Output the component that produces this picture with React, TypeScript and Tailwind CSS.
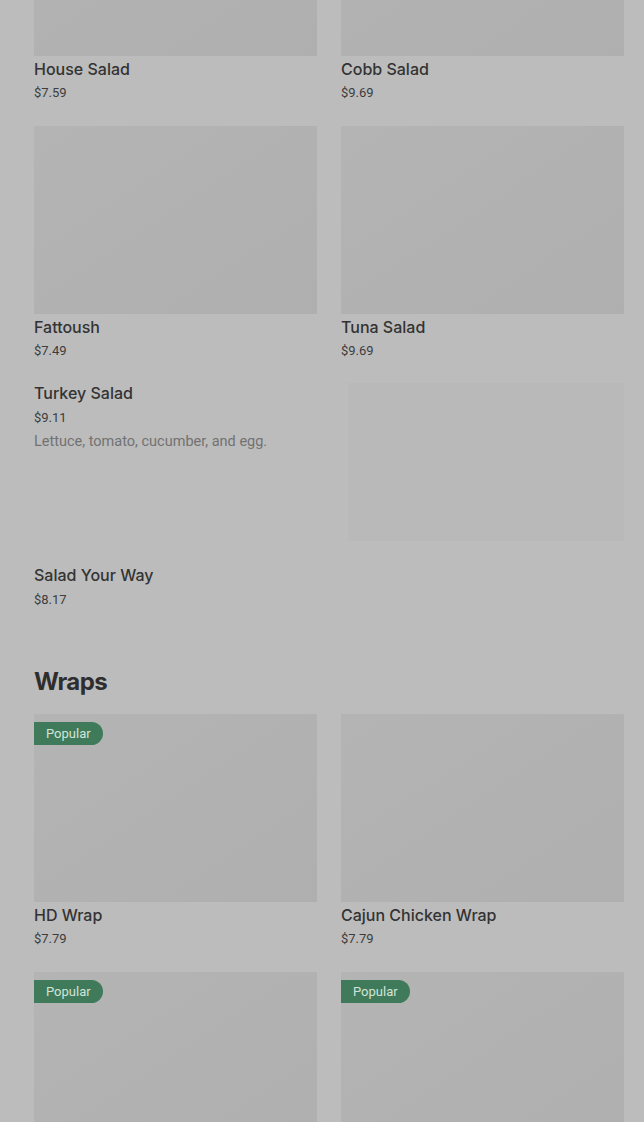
import React from "react";

type Item = {
  name: string;
  price: string;
  popular?: boolean;
};

const salads: Item[] = [
  { name: "House Salad", price: "$7.59" },
  { name: "Cobb Salad", price: "$9.69" },
  { name: "Fattoush", price: "$7.49" },
  { name: "Tuna Salad", price: "$9.69" },
];

const wraps: Item[] = [
  { name: "HD Wrap", price: "$7.79", popular: true },
  { name: "Cajun Chicken Wrap", price: "$7.79" },
  { name: "Chicken Caesar Wrap", price: "$7.79", popular: true },
  { name: "Buffalo Chicken Wrap", price: "$7.79", popular: true },
];

const titleFont = { fontFamily: "Inter, 'Liberation Sans', sans-serif" };

const MenuCard: React.FC<{ item: Item }> = ({ item }) => (
  <div className="flex flex-col">
    <div className="relative h-[188px] bg-gradient-to-br from-[#b4b4b4] to-[#afafaf]">
      {item.popular && (
        <span className="absolute left-0 top-2 rounded-r-full bg-[#3f7b5a] pl-3 pr-3 text-[13px] leading-[23px] text-[#d3e3d8]">
          Popular
        </span>
      )}
    </div>
    <p
      className="mt-px text-base font-medium leading-6 text-[#333333]"
      style={titleFont}
    >
      {item.name}
    </p>
    <p className="mt-[2px] text-[13px] leading-5 text-[#3d3d3d]">
      {item.price}
    </p>
  </div>
);

const App: React.FC = () => {
  return (
    <div
      className="h-[1122px] overflow-hidden bg-[#bcbcbc]"
      style={{ fontFamily: "Roboto, 'Liberation Sans', sans-serif" }}
    >
      <div className="-mt-[132px] pl-[34px] pr-[20px]">
        {/* Salads */}
        <div className="grid grid-cols-2 gap-x-6 gap-y-[23px]">
          {salads.map((item) => (
            <MenuCard key={item.name} item={item} />
          ))}
        </div>

        {/* Turkey Salad */}
        <div className="mt-[20px] flex justify-between">
          <div>
            <p
              className="text-base font-medium leading-6 text-[#333333]"
              style={titleFont}
            >
              Turkey Salad
            </p>
            <p className="mt-[3px] text-[13px] leading-5 text-[#3d3d3d]">
              $9.11
            </p>
            <p className="mt-1 text-[14.5px] leading-5 text-[#727272]">
              Lettuce, tomato, cucumber, and egg.
            </p>
          </div>
          <div className="mt-[2px] h-[158px] w-[276px] bg-[#b9b9b9]" />
        </div>

        {/* Salad Your Way */}
        <div className="mt-[22px]">
          <p
            className="text-base font-medium leading-6 text-[#333333]"
            style={titleFont}
          >
            Salad Your Way
          </p>
          <p className="mt-[3px] text-[13px] leading-5 text-[#3d3d3d]">
            $8.17
          </p>
        </div>

        {/* Wraps */}
        <h2
          className="mt-[56px] text-2xl font-bold leading-8 tracking-tight text-[#2e2e2e]"
          style={titleFont}
        >
          Wraps
        </h2>
        <div className="mt-[16px] grid grid-cols-2 gap-x-6 gap-y-[23px]">
          {wraps.map((item) => (
            <MenuCard key={item.name} item={item} />
          ))}
        </div>
      </div>
    </div>
  );
};

export default App;
